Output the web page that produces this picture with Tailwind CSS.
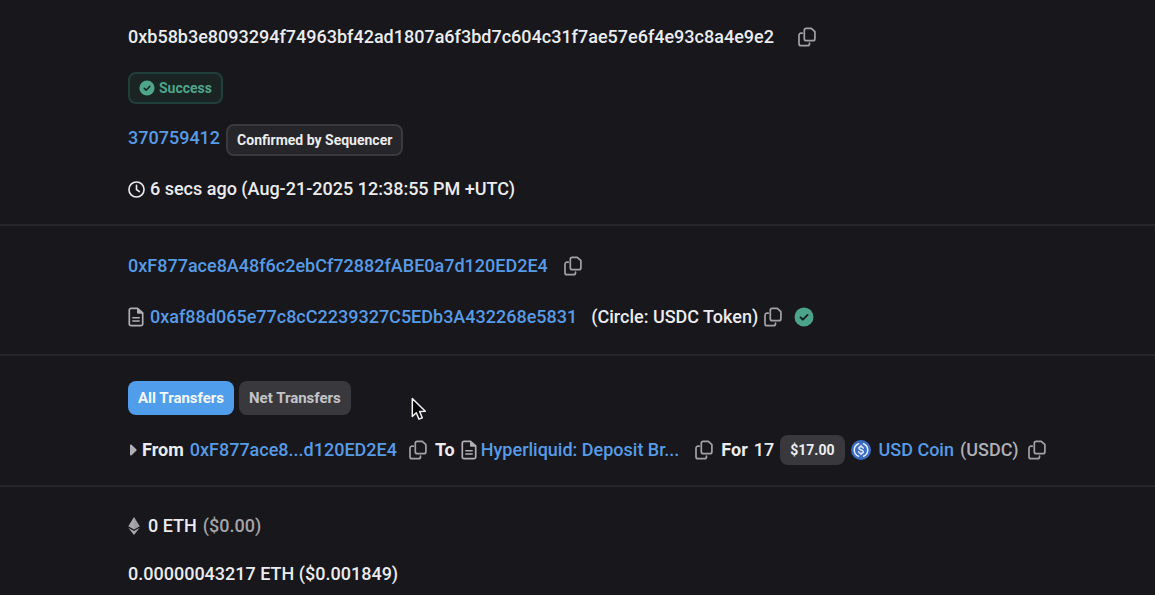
<!DOCTYPE html>
<html lang="en">
<head>
<meta charset="utf-8">
<meta name="viewport" content="width=device-width, initial-scale=1">
<title>Transaction Details</title>
<script src="https://cdn.jsdelivr.net/npm/@tailwindcss/browser@4"></script>
</head>
<body class="min-h-screen overflow-x-hidden bg-[#17171c] font-[Roboto,sans-serif] text-lg leading-6 font-medium text-[#ececee]">
<svg class="hidden" aria-hidden="true">
  <symbol id="copy" viewBox="0 0 18 20"><g fill="none" stroke="currentColor" stroke-width="1.7" stroke-linejoin="round" stroke-linecap="round"><path d="M8.300 1.300h5l3.600 3.400v7a2 2 0 0 1-2 2H8.300a2 2 0 0 1-2-2V3.300a2 2 0 0 1 2-2z"/><path d="M4.200 6.200H3a2 2 0 0 0-2 2v8.500a2 2 0 0 0 2 2h6.500a2 2 0 0 0 2-2v-.7"/></g></symbol>
  <symbol id="doc" viewBox="0 0 16 20"><path fill="none" stroke="currentColor" stroke-width="1.7" stroke-linejoin="round" d="M3 1.300h6.500L14.700 6v11a1.700 1.700 0 0 1-1.700 1.700H3A1.700 1.700 0 0 1 1.300 17V3A1.700 1.700 0 0 1 3 1.300z"/><path fill="currentColor" d="M9 1l6 5.700H10.200A1.200 1.200 0 0 1 9 5.500z"/><path stroke="currentColor" stroke-width="1.500" stroke-linecap="round" d="M4.800 10.700h6.400M4.800 14h6.400"/></symbol>
  <symbol id="check" viewBox="0 0 20 20"><circle cx="10" cy="10" r="9.500" fill="currentColor"/><path fill="none" stroke="#17201f" stroke-width="1.900" stroke-linecap="round" stroke-linejoin="round" d="M6.500 10.300l2.400 2.400 4.700-4.800"/></symbol>
</svg>
<main>
  <section class="flex flex-col items-start border-b-2 border-[#25252a] pt-[25px] pr-4 pb-[23px] pl-32">
    <div class="flex items-center gap-6">
      <span>0xb58b3e8093294f74963bf42ad1807a6f3bd7c604c31f7ae57e6f4e93c8a4e9e2</span>
      <button type="button" aria-label="Copy transaction hash" class="text-[#a2a2a6]"><svg class="h-5 w-[18px]"><use href="#copy"/></svg></button>
    </div>
    <div class="mt-[23px] flex h-8 items-center gap-1 rounded-lg border-2 border-[#21403b] bg-[#192423] px-[9px] text-sm font-bold text-[#4fa58a]">
      <svg class="size-4"><use href="#check"/></svg><span>Success</span>
    </div>
    <div class="mt-5 flex items-start gap-1.5">
      <a href="#" class="mt-0.5 text-[#579be6]">370759412</a>
      <span class="flex h-8 items-center rounded-lg border-2 border-[#3a3a3e] bg-[#25252a] px-[9px] text-sm font-bold">Confirmed by Sequencer</span>
    </div>
    <div class="mt-[21px] flex items-center gap-[5px]">
      <svg class="size-[17px]" viewBox="0 0 18 18" fill="none" stroke="currentColor" stroke-width="1.700" stroke-linecap="round"><circle cx="9" cy="9" r="8"/><path d="M9 4.500V9l3 2.200"/></svg>
      <span>6 secs ago (Aug-21-2025 12:38:55 PM +UTC)</span>
    </div>
  </section>

  <section class="flex flex-col items-start gap-[27px] border-b-2 border-[#25252a] pt-7 pr-4 pb-[25px] pl-32">
    <div class="flex items-center gap-4">
      <a href="#" class="text-[#579be6]">0xF877ace8A48f6c2ebCf72882fABE0a7d120ED2E4</a>
      <button type="button" aria-label="Copy sender address" class="text-[#a2a2a6]"><svg class="h-5 w-[18px]"><use href="#copy"/></svg></button>
    </div>
    <div class="flex items-center">
      <svg class="mr-1.5 h-5 w-4 text-[#b0b0b4]"><use href="#doc"/></svg>
      <a href="#" class="mr-3.5 text-[#579be6]">0xaf88d065e77c8cC2239327C5EDb3A432268e5831</a>
      <span class="mr-1.5">(Circle: USDC Token)</span>
      <button type="button" aria-label="Copy contract address" class="mr-3 text-[#a2a2a6]"><svg class="h-5 w-[18px]"><use href="#copy"/></svg></button>
      <svg class="size-5 text-[#4ba38a]"><use href="#check"/></svg>
    </div>
  </section>

  <section class="border-b-2 border-[#25252a] pt-[25px] pr-4 pb-5 pl-32">
    <div class="flex gap-[5px] text-[15px] font-bold">
      <button type="button" class="h-[34px] rounded-lg bg-[#509deb] px-2.5 text-[#f4f8fd]">All Transfers</button>
      <button type="button" class="h-[34px] rounded-lg bg-[#39393d] px-2.5 text-[#c4c4c8]">Net Transfers</button>
    </div>
    <div class="mt-5 flex h-[30px] items-center whitespace-nowrap">
      <svg class="mr-1 ml-0.5 h-3 w-2 text-[#b0b0b4]" viewBox="0 0 8 12"><path fill="currentColor" d="M0 1.500C0 .6 1 .2 1.600.8l4.700 4.500c.4.400.4 1 0 1.400l-4.700 4.500C1 11.800 0 11.400 0 10.500z"/></svg>
      <span class="mr-1.5 font-bold">From</span>
      <a href="#" class="mr-3 text-[#579be6]">0xF877ace8...d120ED2E4</a>
      <button type="button" aria-label="Copy from address" class="mr-2 text-[#a2a2a6]"><svg class="h-5 w-[18px]"><use href="#copy"/></svg></button>
      <span class="mr-1.5 font-bold">To</span>
      <svg class="mr-1 h-5 w-4 text-[#b0b0b4]"><use href="#doc"/></svg>
      <a href="#" class="mr-4 text-[#579be6]">Hyperliquid: Deposit Br...</a>
      <button type="button" aria-label="Copy to address" class="mr-2 text-[#a2a2a6]"><svg class="h-5 w-[18px]"><use href="#copy"/></svg></button>
      <span class="mr-1.5 font-bold">For</span><span class="mr-1.5">17</span>
      <span class="mr-1.5 flex h-[30px] items-center rounded-lg bg-[#39393d] px-2.5 text-sm font-bold">$17.00</span>
      <svg class="mr-2 size-5" viewBox="0 0 20 20" fill="none" stroke="#e4ecfa" stroke-linecap="round"><circle cx="10" cy="10" r="10" fill="#3b6dc4" stroke="none"/><path stroke-width="1.500" d="M7.500 3.700a6.800 6.800 0 0 0 0 12.600M12.500 3.700a6.800 6.800 0 0 1 0 12.600"/><path stroke-width="1.400" d="M12.200 8.200c-.2-1-1-1.500-2.200-1.500-1.300 0-2.100.6-2.100 1.600 0 2.300 4.400 1.100 4.400 3.400 0 1-.9 1.600-2.300 1.600-1.300 0-2.200-.6-2.300-1.600M10 5.400v1.300M10 13.300v1.300"/></svg>
      <a href="#" class="mr-1.5 text-[#579be6]">USD Coin</a>
      <span class="mr-2.5 text-[#b0b0b4]">(USDC)</span>
      <button type="button" aria-label="Copy token address" class="text-[#a2a2a6]"><svg class="h-5 w-[18px]"><use href="#copy"/></svg></button>
    </div>
  </section>

  <section class="flex flex-col items-start gap-6 pt-[27px] pr-4 pl-32">
    <div class="flex items-center">
      <svg class="mr-2 h-[18px] w-3" viewBox="0 0 12 18"><path fill="#a9a9ad" d="M6 0l5.700 9.200L6 12.400.3 9.200z"/><path fill="#8e8e92" d="M6 0l5.700 9.200L6 12.400z" opacity=".4"/><path fill="#a9a9ad" d="M.3 10.700L6 14l5.700-3.300L6 18z"/></svg>
      <span class="mr-1.5">0 ETH</span>
      <span class="text-[#a4a4a8]">($0.00)</span>
    </div>
    <div>0.00000043217 ETH ($0.001849)</div>
  </section>
</main>
<svg class="pointer-events-none absolute top-[397px] left-[411px] h-6 w-4" viewBox="0 0 16 24" aria-hidden="true"><path fill="#050507" stroke="#f2f2f2" stroke-width="1.500" stroke-linejoin="round" d="M1.300 1.500v18l4-3.700 2.700 6.300 3.300-1.400-2.700-6.200 5.700-.3z"/></svg>
</body>
</html>
